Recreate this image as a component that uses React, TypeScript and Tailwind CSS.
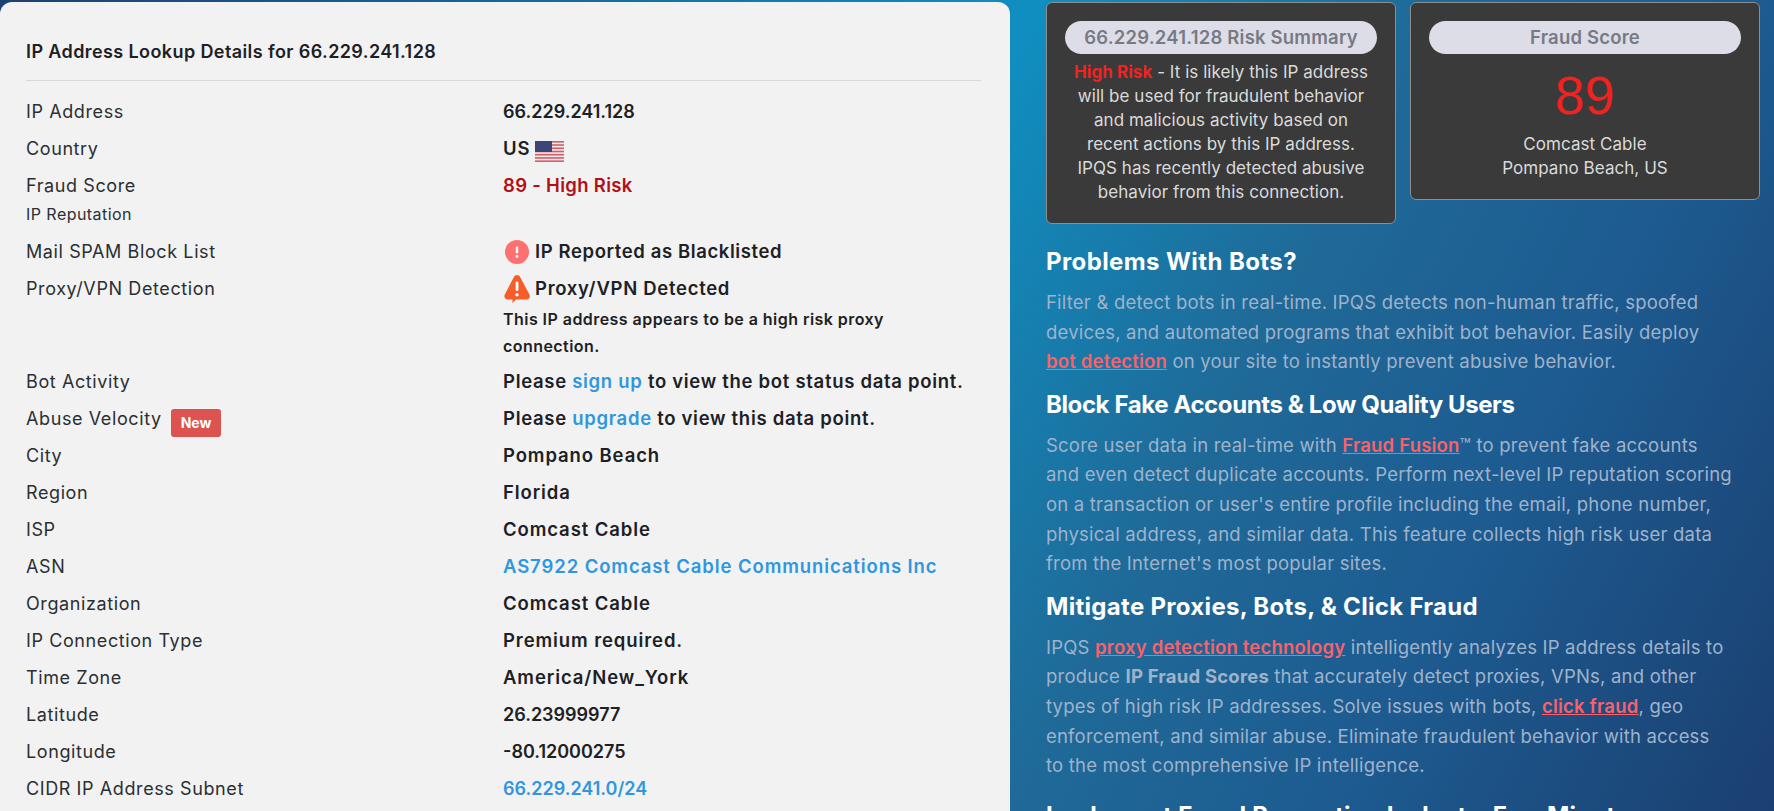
const Row = ({ label, children }: { label: React.ReactNode; children: React.ReactNode }) => (
  <div className="grid grid-cols-[477px_1fr] leading-[37px]">
    <div className="text-[18px] tracking-[0.6px] text-[#2b2f33]">{label}</div>
    <div className="text-[18.5px] font-semibold tracking-[0.9px] text-[#1d2125]">{children}</div>
  </div>
);

const Num = ({ children }: { children: React.ReactNode }) => <span className="text-[18px] tracking-normal">{children}</span>;

const Flag = () => (
  <svg viewBox="0 0 29 21" className="ml-[5px] inline-block h-[21px] w-[29px] align-[-7px]">
    <rect width="29" height="21" fill="#f4e9ea" />
    {[0, 1, 2, 3, 4, 5, 6].map((i) => (
      <rect key={i} x="0" y={i * 3.23} width="29" height="1.6" fill="#cf5f6b" />
    ))}
    <rect width="17" height="11" fill="#3a4677" />
  </svg>
);

const CircleAlert = () => (
  <svg viewBox="0 0 24 24" className="ml-0.5 mr-1.5 h-6 w-6 shrink-0">
    <circle cx="12" cy="12" r="12" fill="#ff7070" />
    <rect x="10.8" y="6.5" width="2.4" height="7" rx="1.1" fill="#fff" />
    <circle cx="12" cy="16.5" r="1.4" fill="#fff" />
  </svg>
);

const TriangleAlert = () => (
  <svg viewBox="0 0 26 28" className="ml-px mr-[5px] h-7 w-[26px] shrink-0">
    <path d="M13 0c1.4 0 2.4.8 3.1 2L25.4 19.5c1.3 2.6-.2 5-3 5H12l-3.5 3.5V24.500H4c-2.800 0-4.500-2.400-3.200-5L9.900 2C10.600.8 11.600 0 13 0z" fill="#f95c2b" />
    <rect x="11.600" y="6.500" width="2.800" height="9.500" rx="1.300" fill="#fff" />
    <circle cx="13" cy="19.700" r="1.700" fill="#fff" />
  </svg>
);

const Hot = ({ children }: { children: React.ReactNode }) => (
  <a className="font-semibold text-[#f9616b] underline">{children}</a>
);

const Blue = ({ children }: { children: React.ReactNode }) => <a className="text-[#2f96e0]">{children}</a>;

const Pill = ({ children }: { children: React.ReactNode }) => (
  <div className="h-[33px] rounded-full bg-[#dcdde6] text-center text-[18.5px] font-semibold leading-[33px] tracking-[0.2px] text-[#777a85]">
    {children}
  </div>
);

const Heading = ({ children, className }: { children: React.ReactNode; className?: string }) => (
  <h2 className={`text-[24px] font-bold leading-[36px] text-white ${className ?? ""}`}>{children}</h2>
);

export default function App() {
  return (
    <div className="flex h-screen overflow-hidden bg-[linear-gradient(118deg,#1d4070_0%,#0f8fc0_47%,#1f6a98_65%,#1d5b90_80%,#1b3f70_100%)] font-['Inter',sans-serif]">
      <div className="mt-[2px] w-[1010px] shrink-0 rounded-t-xl bg-[#f2f2f2] px-[26px] pt-[36px]">
        <div className="mr-[3px] border-b border-[#d8d8d8] pb-[14px] text-[18px] font-semibold leading-[28px] tracking-[0.4px] text-[#1d2125]">
          IP Address Lookup Details for 66.229.241.128
        </div>
        <div className="mt-[12px]">
          <Row label="IP Address">
            <Num>66.229.241.128</Num>
          </Row>
          <Row label="Country">
            US
            <Flag />
          </Row>
          <Row label="Fraud Score">
            <span className="tracking-[0.3px] text-[#b30f17]">89 - High Risk</span>
          </Row>
          <div className="mb-[8px] text-[16px] leading-[21px] tracking-[0.45px] text-[#2b2f33]">IP Reputation</div>
          <Row label="Mail SPAM Block List">
            <div className="flex h-[37px] items-center tracking-[0.6px]">
              <CircleAlert />
              IP Reported as Blacklisted
            </div>
          </Row>
          <Row label="Proxy/VPN Detection">
            <div className="flex h-[37px] items-center tracking-[0.7px]">
              <TriangleAlert />
              Proxy/VPN Detected
            </div>
            <div className="-mt-px mb-[3px] w-[410px] text-[16px] leading-[27px] tracking-[0.45px]">
              This IP address appears to be a high risk proxy connection.
            </div>
          </Row>
          <Row label="Bot Activity">
            <span className="tracking-[0.7px]">
              Please <Blue>sign up</Blue> to view the bot status data point.
            </span>
          </Row>
          <Row
            label={
              <span>
                Abuse Velocity
                <span className="ml-[9px] inline-block h-7 rounded-[3px] bg-[#dc5350] px-[10px] align-[-3px] text-[14px] font-bold leading-7 tracking-normal text-white">
                  New
                </span>
              </span>
            }
          >
            <span className="tracking-[0.7px]">
              Please <Blue>upgrade</Blue> to view this data point.
            </span>
          </Row>
          <Row label="City">Pompano Beach</Row>
          <Row label="Region">Florida</Row>
          <Row label="ISP">Comcast Cable</Row>
          <Row label="ASN">
            <Blue>AS7922 Comcast Cable Communications Inc</Blue>
          </Row>
          <Row label="Organization">Comcast Cable</Row>
          <Row label="IP Connection Type">Premium required.</Row>
          <Row label="Time Zone">America/New_York</Row>
          <Row label="Latitude">
            <Num>26.23999977</Num>
          </Row>
          <Row label="Longitude">
            <Num>-80.12000275</Num>
          </Row>
          <Row label="CIDR IP Address Subnet">
            <Blue>
              <Num>66.229.241.0/24</Num>
            </Blue>
          </Row>
        </div>
      </div>

      <div className="ml-[36px] mt-[2px] w-[714px] shrink-0">
        <div className="flex items-start gap-[14px]">
          <div className="w-[350px] rounded-md border border-[#8e8e8e] bg-[#3a3a3a] px-[18px] pb-[19px] pt-[18px] text-center text-[17px] leading-[24px] tracking-[0.05px] text-[#dadada]">
            <Pill>66.229.241.128 Risk Summary</Pill>
            <p className="mt-[6px] whitespace-nowrap">
              <span className="font-bold text-[#f02222]">High Risk</span> - It is likely this IP address
              <br />
              will be used for fraudulent behavior
              <br />
              and malicious activity based on
              <br />
              recent actions by this IP address.
              <br />
              IPQS has recently detected abusive
              <br />
              behavior from this connection.
            </p>
          </div>
          <div className="w-[350px] rounded-md border border-[#8e8e8e] bg-[#3a3a3a] px-[18px] pb-[19px] pt-[18px] text-center text-[17px] leading-[24px] tracking-[0.05px] text-[#dadada]">
            <Pill>Fraud Score</Pill>
            <div className="mt-[2px] -mb-[2px] font-['Liberation_Sans',sans-serif] text-[54px] font-light leading-[78px] text-[#f02222]">
              89
            </div>
            <div>Comcast Cable</div>
            <div>Pompano Beach, US</div>
          </div>
        </div>

        <div className="mt-[20px] whitespace-nowrap text-[18.5px] leading-[29.6px] tracking-[0.2px] text-[#9fb3cb]">
          <Heading className="tracking-[0.4px]">Problems With Bots?</Heading>
          <p className="mt-[8px]">
            Filter &amp; detect bots in real-time. IPQS detects non-human traffic, spoofed
            <br />
            devices, and automated programs that exhibit bot behavior. Easily deploy
            <br />
            <Hot>bot detection</Hot> on your site to instantly prevent abusive behavior.
          </p>
          <Heading className="mt-[10px] tracking-[-0.4px]">Block Fake Accounts &amp; Low Quality Users</Heading>
          <p className="mt-[8px]">
            Score user data in real-time with <Hot>Fraud Fusion</Hot>™ to prevent fake accounts
            <br />
            and even detect duplicate accounts. Perform next-level IP reputation scoring
            <br />
            on a transaction or user's entire profile including the email, phone number,
            <br />
            physical address, and similar data. This feature collects high risk user data
            <br />
            from the Internet's most popular sites.
          </p>
          <Heading className="mt-[10px] tracking-[0.3px]">Mitigate Proxies, Bots, &amp; Click Fraud</Heading>
          <p className="mt-[8px]">
            IPQS <Hot>proxy detection technology</Hot> intelligently analyzes IP address details to
            <br />
            produce <strong className="font-bold">IP Fraud Scores</strong> that accurately detect proxies, VPNs, and other
            <br />
            types of high risk IP addresses. Solve issues with bots, <Hot>click fraud</Hot>, geo
            <br />
            enforcement, and similar abuse. Eliminate fraudulent behavior with access
            <br />
            to the most comprehensive IP intelligence.
          </p>
          <Heading className="mt-[17px]">Implement Fraud Prevention In Just a Few Minutes</Heading>
        </div>
      </div>
    </div>
  );
}
